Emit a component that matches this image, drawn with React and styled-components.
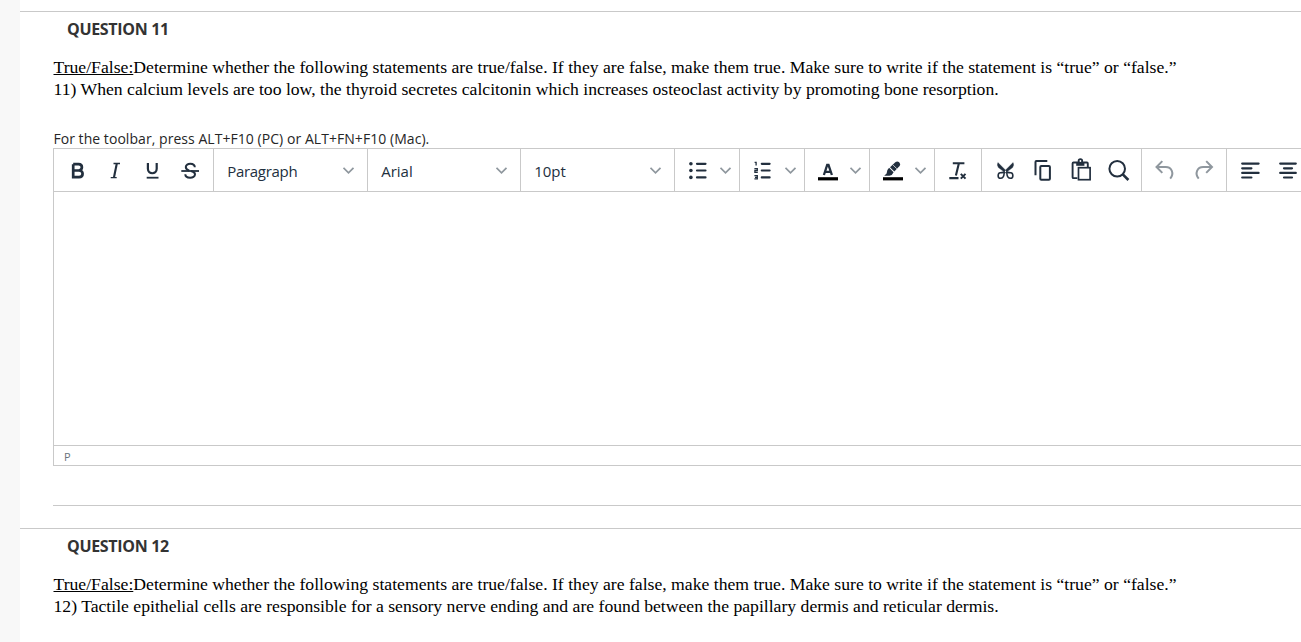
import React from "react";
import styled, { createGlobalStyle } from "styled-components";

const GlobalStyle = createGlobalStyle`
  * { box-sizing: border-box; }
  body { margin: 0; background: #f8f8f8; overflow: hidden; }
`;

const Page = styled.main`
  height: 642px;
  margin-left: 20px;
  padding-top: 11px;
  background: #fff;
  overflow: hidden;
`;

const Question = styled.section`
  height: 517px;
  border-top: 1px solid #c9c9c9;
  padding: 6px 0 0 33px;
  overflow: hidden;
`;

const Title = styled.h3`
  margin: 0 0 0 14px;
  height: 22px;
  font: 700 16px/22px "Open Sans", sans-serif;
  letter-spacing: -0.32px;
  color: #333;
`;

const Prompt = styled.div`
  margin-top: 16px;
  padding-left: 0.5px;
  font: 17.667px/22px "Liberation Serif", serif;
  color: #000;
  white-space: nowrap;
`;

const Hint = styled.div`
  margin-top: 29px;
  height: 19px;
  padding-left: 0.4px;
  font: 14px/20px "Open Sans", sans-serif;
  letter-spacing: 0.05px;
  color: #262626;
  white-space: nowrap;
`;

const Editor = styled.div`
  width: 1300px;
  height: 318px;
  display: flex;
  flex-direction: column;
  border: 1px solid #c9c9c9;
`;

const Toolbar = styled.div`
  display: flex;
  flex: 0 0 43px;
  border-bottom: 1px solid #c9c9c9;
`;

const Group = styled.div`
  display: flex;
  flex: 0 0 ${(p) => p.$width}px;
  align-items: center;
  gap: ${(p) => (p.$split ? 10 : 14)}px;
  padding-left: 11px;
  padding-top: 2px;
  border-right: 1px solid #c9c9c9;
`;

const Select = styled.div`
  display: flex;
  flex: 0 0 ${(p) => p.$width}px;
  align-items: center;
  justify-content: space-between;
  padding: 2px 11.6px 0 13.2px;
  border-right: 1px solid #c9c9c9;
  font: 15px/24px "Open Sans", sans-serif;
  letter-spacing: ${(p) => p.$spacing || 0}px;
  color: #222f3e;
`;

const Glyph = styled.svg`
  display: block;
  flex: none;
  width: 24px;
  height: 24px;
  fill: none;
  stroke: ${(p) => (p.$muted ? "#8f979e" : "#222f3e")};
  stroke-width: ${(p) => p.$weight || 2};
  overflow: visible;
`;

const Arrow = styled.svg`
  display: block;
  flex: none;
  width: 12px;
  height: 8px;
  fill: none;
  stroke: #8f979e;
  stroke-width: 1.7;
`;

const EditArea = styled.div`
  flex: 1;
`;

const StatusBar = styled.div`
  flex: 0 0 20px;
  height: 20px;
  border-top: 1px solid #c9c9c9;
  padding: 2px 0 0 10px;
  font: 11px/17px "Open Sans", sans-serif;
  color: #6a737c;
`;

const Divider = styled.div`
  margin-top: 39px;
  border-top: 1px solid #c9c9c9;
`;

const Chevron = () => (
  <Arrow viewBox="0 0 12 8">
    <path d="M0.5 0.8L5.5 5.9L10.5 0.8" />
  </Arrow>
);

const Bold = () => (
  <Glyph viewBox="0 0 24 24" $weight={2.7}>
    <path d="M8.2 5.2H13.6C18 5.2 18 11.5 13.6 11.5H8.2M8.2 11.5H14C18.8 11.5 18.8 18.2 14 18.2H8.2V5.2" />
  </Glyph>
);
const Italic = () => (
  <Glyph viewBox="0 0 24 24" $weight={1.3}>
    <path d="M10.5 4.5H17M7.7 18.7H13.7" />
    <path d="M13.8 4.5L10.9 18.7" strokeWidth="2.1" />
  </Glyph>
);
const Underline = () => (
  <Glyph viewBox="0 0 24 24" $weight={2.2}>
    <path d="M6.9 4V9.8C6.9 15.7 15.7 15.7 15.7 9.8V4" />
    <path d="M5.7 18.7H17.5" strokeWidth="1.8" />
  </Glyph>
);
const Strike = () => (
  <Glyph viewBox="0 0 24 24" $weight={2}>
    <path d="M15.8 8.2C15.7 3.6 6.8 3.6 6.8 8.1C6.8 9.8 8 10.9 10.3 11.7M12 12C15 12.8 16 13.8 16 15.2C16 20 6.3 19.8 6.3 15.2" />
    <path d="M2.3 12H20" strokeWidth="1.8" />
  </Glyph>
);
const Bullets = () => (
  <Glyph viewBox="0 0 24 24" $weight={2.2} strokeLinecap="round">
    <path d="M11 4.8H19.5M11 11.5H19.5M11 18.4H19.5" />
    <g fill="#222f3e" stroke="none">
      <circle cx="4.9" cy="4.8" r="1.8" />
      <circle cx="4.9" cy="11.5" r="1.8" />
      <circle cx="4.9" cy="18.4" r="1.8" />
    </g>
  </Glyph>
);
const Numbers = () => (
  <Glyph viewBox="0 0 24 24" $weight={2.2} strokeLinecap="round">
    <path d="M10.8 4.8H18.6M10.8 11.5H18.6M10.8 18.4H18.6" />
    <path
      strokeWidth="1.3"
      strokeLinecap="butt"
      d="M3.6 3.3H5.1V6.6M3.4 9.7H6.3V11.5H3.9V13.3H6.8M3.4 16.7H6.3V19.9H3.4M4 18.3H6.3"
    />
  </Glyph>
);
const TextColor = () => (
  <Glyph viewBox="0 0 24 24" $weight={2.3}>
    <path d="M7.9 16L11.2 5.9H12.5L15.9 16M9 12.8H14.8" />
    <path d="M2 19.8H22" stroke="#000" strokeWidth="3.2" />
  </Glyph>
);
const Highlight = () => (
  <Glyph viewBox="0 0 24 24">
    <path
      d="M9 8.2L14.6 3.1Q16.2 1.8 17.9 3.1L18.7 4Q19.8 5.5 18.6 6.9L13.3 12.6Z"
      fill="#222f3e"
      stroke="none"
    />
    <path
      d="M8.1 8.8L12.6 13.3Q11.5 16.3 8.4 16.8H3.2L5.6 14.5Q5.7 10.8 8.1 8.8Z"
      fill="#222f3e"
      stroke="none"
    />
    <path d="M12.1 6.1L15.8 9.7" stroke="#fff" strokeWidth="0.7" />
    <path d="M2 19.8H22" stroke="#000" strokeWidth="3.2" />
  </Glyph>
);
const ClearFormat = () => (
  <Glyph viewBox="0 0 24 24" $weight={2.1}>
    <path d="M6.8 4.3H18.4M12.9 4.3L9.9 16.5M3.3 19.1H12.5" />
    <path d="M14.8 14.9L19.5 19.6M19.5 14.9L14.8 19.6" strokeWidth="2" />
  </Glyph>
);
const Cut = () => (
  <Glyph viewBox="0 0 24 24" $weight={1.6}>
    <path
      d="M4.9 3.6L13.8 12.4L12.4 13.8L5.4 8.6Q3.6 6.2 4.9 3.6ZM20.1 3.6L11.2 12.4L12.6 13.8L19.6 8.6Q21.4 6.2 20.1 3.6Z"
      fill="#222f3e"
      strokeWidth="0.4"
    />
    <path d="M12 12.9C9.8 13.5 9 13.8 7.3 13.8C4.5 14.1 4.3 19.3 7.5 19.3C10.5 19.3 11 17.1 11.2 14M13 12.9C15.2 13.5 16 13.8 17.7 13.8C20.5 14.1 20.7 19.3 17.5 19.3C14.5 19.3 14 17.1 13.8 14" />
  </Glyph>
);
const Copy = () => (
  <Glyph viewBox="0 0 24 24">
    <path d="M4.5 16.2V3Q4.5 2.1 5.4 2.1H16.3" />
    <rect x="9.3" y="7" width="9.6" height="13.7" rx="1" />
  </Glyph>
);
const Paste = () => (
  <Glyph viewBox="0 0 24 24" $weight={1.9}>
    <path d="M8.4 19.1H4.5Q3.6 19.1 3.6 18.2V4.4Q3.6 3.5 4.5 3.5H17.9Q18.8 3.5 18.8 4.4V8" />
    <path d="M7.2 3V6.8H15.4V3" fill="#222f3e" stroke="none" />
    <circle cx="11.4" cy="2" r="1.8" fill="#fff" strokeWidth="1.8" />
    <rect x="9.5" y="8.7" width="11.6" height="12" fill="#fff" strokeWidth="1.7" />
  </Glyph>
);
const Search = () => (
  <Glyph viewBox="0 0 24 24" $weight={2}>
    <circle cx="10.2" cy="9.8" r="7.8" />
    <path d="M15.8 15.4L21.4 21" strokeWidth="2.6" />
  </Glyph>
);
const Undo = () => (
  <Glyph viewBox="0 0 24 24" $muted $weight={2}>
    <path d="M9.3 2.1L3.5 8L9.3 13.9M3.5 8H12.7C18.6 8 21.6 14.2 17.2 19.6" />
  </Glyph>
);
const Redo = () => (
  <Glyph viewBox="0 0 24 24" $muted $weight={2}>
    <path d="M15.2 2.1L21 8L15.2 13.9M21 8H12.2C6.3 8 3.3 14.2 7.7 19.6" />
  </Glyph>
);
const AlignLeft = () => (
  <Glyph viewBox="0 0 24 24" $weight={2.2} strokeLinecap="round">
    <path d="M4.2 4.6H20.6M4.2 9.3H13.4M4.2 13.9H20.6M4.2 18.5H13.4" />
  </Glyph>
);
const AlignCenter = () => (
  <Glyph viewBox="0 0 24 24" $weight={2.2} strokeLinecap="round">
    <path d="M4.2 4.6H19.8M8 9.3H16M4.2 13.9H19.8M8 18.5H16" />
  </Glyph>
);

const AnswerEditor = () => (
  <Editor>
    <Toolbar>
      <Group $width={160}>
        <Bold />
        <Italic />
        <Underline />
        <Strike />
      </Group>
      <Select $width={154} $spacing={-0.3}>Paragraph<Chevron /></Select>
      <Select $width={153}>Arial<Chevron /></Select>
      <Select $width={154}>10pt<Chevron /></Select>
      <Group $width={65} $split><Bullets /><Chevron /></Group>
      <Group $width={65} $split><Numbers /><Chevron /></Group>
      <Group $width={65} $split><TextColor /><Chevron /></Group>
      <Group $width={65} $split><Highlight /><Chevron /></Group>
      <Group $width={47}><ClearFormat /></Group>
      <Group $width={160}>
        <Cut />
        <Copy />
        <Paste />
        <Search />
      </Group>
      <Group $width={85}>
        <Undo />
        <Redo />
      </Group>
      <Group $width={160}>
        <AlignLeft />
        <AlignCenter />
      </Group>
    </Toolbar>
    <EditArea />
    <StatusBar>P</StatusBar>
  </Editor>
);

const Instructions = () => (
  <div>
    <u>True/False:</u>Determine whether the following statements are true/false. If they are
    false, make them true. Make sure to write if the statement is “true” or “false.”
  </div>
);

export default function App() {
  return (
    <>
      <GlobalStyle />
      <Page>
        <Question>
          <Title>QUESTION 11</Title>
          <Prompt>
            <Instructions />
            <div>
              11) When calcium levels are too low, the thyroid secretes calcitonin which increases
              osteoclast activity by promoting bone resorption.
            </div>
          </Prompt>
          <Hint>For the toolbar, press ALT+F10 (PC) or ALT+FN+F10 (Mac).</Hint>
          <AnswerEditor />
          <Divider />
        </Question>
        <Question>
          <Title>QUESTION 12</Title>
          <Prompt>
            <Instructions />
            <div>
              12) Tactile epithelial cells are responsible for a sensory nerve ending and are found
              between the papillary dermis and reticular dermis.
            </div>
          </Prompt>
        </Question>
      </Page>
    </>
  );
}
